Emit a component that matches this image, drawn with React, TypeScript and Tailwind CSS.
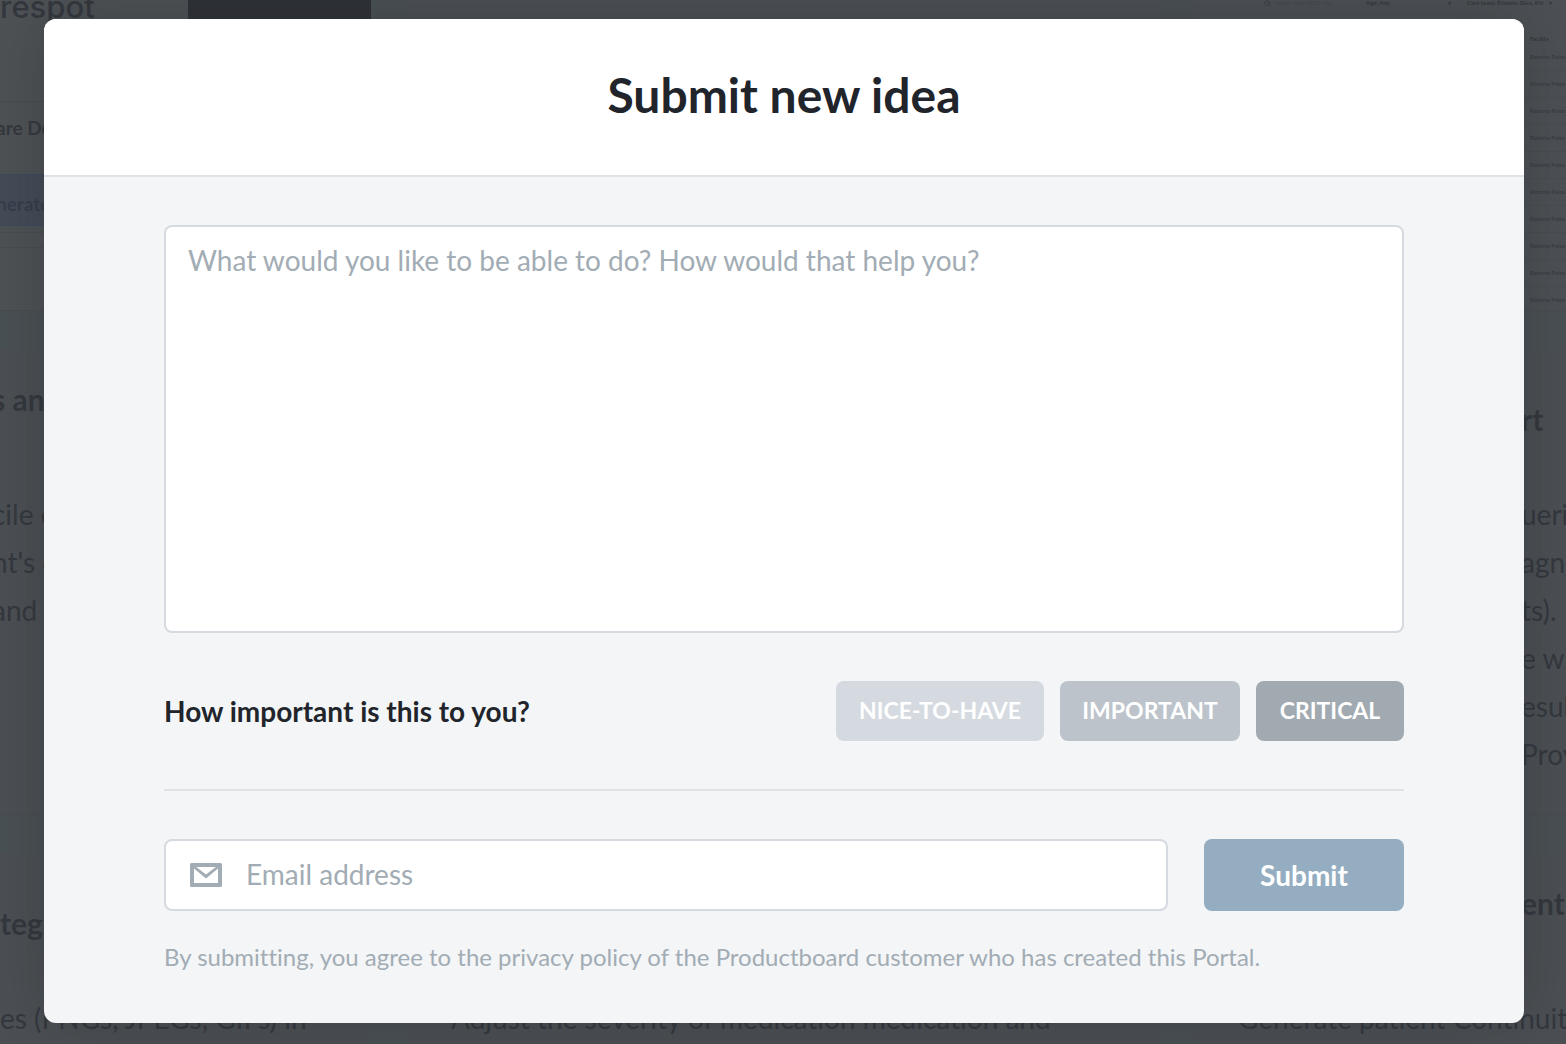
import { Search } from "lucide-react";

const facilityRows = Array.from({ length: 10 }, (_, i) => i);

const importanceOptions = [
  { label: "NICE-TO-HAVE", className: "w-[208px] bg-[#d5dae1]" },
  { label: "IMPORTANT", className: "w-[180px] bg-[#bcc3cb]" },
  { label: "CRITICAL", className: "w-[148px] bg-[#a2aab1]" },
];

const EnvelopeIcon = () => (
  <svg width="32" height="24" viewBox="0 0 32 24" fill="#a2acb4" aria-hidden="true" className="shrink-0">
    <path
      fillRule="evenodd"
      d="M1.5 0h29A1.5 1.5 0 0 1 32 1.5v21a1.5 1.5 0 0 1-1.5 1.5h-29A1.5 1.5 0 0 1 0 22.5v-21A1.5 1.5 0 0 1 1.5 0ZM6.2 4 16 11.4 25.8 4ZM4 5.6V20h24V5.6L16 15.6Z"
    />
  </svg>
);

const PortalBackdrop = () => (
  <div
    aria-hidden="true"
    className="absolute inset-0 flex gap-[38px] overflow-hidden bg-[#4a5154] whitespace-nowrap text-[28px] leading-[48px] text-[#34383e]"
  >
    {/* Left column */}
    <div className="flex w-[371px] shrink-0 flex-col gap-[39px]">
      <div className="h-[311px] shrink-0 overflow-hidden border-b border-[#484c50] bg-[#4e5255]">
        <div className="flex h-[102px] justify-between border-b border-[#484c50]">
          <span className="font-['Inter',sans-serif] text-[31px] font-medium leading-[14px]">respot</span>
          <div className="w-[183px] bg-[#2e3136]" />
        </div>
        <div className="-ml-1 flex h-[72px] items-center pb-5 text-[19px] font-bold">are Documents</div>
        <div className="flex h-[52px] items-center border-y border-[#3c495a] bg-[#454c57] pt-2 text-[19px] font-bold text-[#353e4b]">
          <span className="-ml-1">nerate</span>
        </div>
        <div className="mt-[6px] h-4 border-y border-[#484c50]" />
      </div>
      <div className="h-[465px] shrink-0 overflow-hidden border-b border-[#484c50] bg-[#4c5054] pt-[25px]">
        <div className="-ml-2">
          <h2 className="mb-[67px] text-[30px] font-bold">s and</h2>
          <p>cile c</p>
          <p>nt's c</p>
          <p>and</p>
        </div>
      </div>
      <div className="h-[400px] shrink-0 bg-[#4c5054] pt-[45px]">
        <h2 className="mb-[47px] text-[30px] font-bold">tegrations</h2>
        <p>es (PNGs, JPEGs, GIFs) in</p>
      </div>
    </div>

    {/* Middle column */}
    <div className="flex min-w-0 flex-1 items-start bg-[#4c5054] px-[42px] pt-[994px]">
      <p>Adjust the severity of medication medication and</p>
    </div>

    {/* Right column */}
    <div className="flex w-[370px] shrink-0 flex-col gap-[39px]">
      <div className="h-[311px] shrink-0 overflow-hidden border-b border-[#484c50] bg-[#4d5155] pl-[56px] text-[6px] leading-[6px]">
        <div className="flex h-[33px] items-start">
          <Search size={7} className="ml-3" />
          <span className="ml-1 w-[91px] text-[#45494d]">Name, Age, DOB, etc.</span>
          <span className="w-[82px] font-bold">Age: Any</span>
          <span className="w-[19px]">▾</span>
          <span className="w-[82px] font-bold">Care team: Ernesto Silva, RN</span>
          <span>▾</span>
        </div>
        <div className="flex h-[11px] items-center pl-[278px] font-bold">Facility</div>
        {facilityRows.map((row) => (
          <div key={row} className="flex h-[27px] items-center border-b border-[#494d51] pl-[278px]">
            Rancho Palos Verdes
          </div>
        ))}
      </div>
      <div className="h-[465px] shrink-0 overflow-hidden border-b border-[#484c50] bg-[#4c5054] pl-[325px] pt-[45px]">
        <h2 className="mb-[47px] text-[30px] font-bold">rt</h2>
        <p>ueries</p>
        <p>agnosis</p>
        <p>ts).</p>
        <p>e will</p>
        <p>esults</p>
        <p>Provider</p>
      </div>
      <div className="h-[400px] shrink-0 bg-[#4c5054] pt-[25px]">
        <h2 className="mb-[67px] pl-[325px] text-[30px] font-bold">ent</h2>
        <p className="pl-[42px]">Generate patient Continuity</p>
      </div>
    </div>
  </div>
);

const App = () => {
  return (
    <div className="relative min-h-screen overflow-hidden font-['Lato',sans-serif] [font-variant-ligatures:none]">
      <PortalBackdrop />

      <div
        role="dialog"
        aria-labelledby="idea-title"
        className="relative mt-[19px] mr-[42px] mb-[21px] ml-11 overflow-hidden rounded-xl bg-[#f3f5f7] text-[#21252b] shadow-[0_0_60px_rgba(33,37,43,0.35)]"
      >
        <header className="border-b-2 border-[#dfe3e8] bg-white pt-[46px] pb-[50px] text-center">
          <h1 id="idea-title" className="text-[48px] font-bold leading-[60px]">
            Submit new idea
          </h1>
        </header>

        <form className="px-[120px] pt-12 pb-[50px]" onSubmit={(e) => e.preventDefault()}>
          <textarea
            aria-label="Your idea"
            placeholder="What would you like to be able to do? How would that help you?"
            className="block h-[408px] w-full resize-none rounded-lg border-2 border-[#d5dae1] bg-white px-[22px] py-[15px] text-[28px] leading-9 outline-none placeholder:text-[#a2acb4]"
          />

          <div className="flex items-center justify-between py-12">
            <span id="importance-label" className="text-[28px] font-bold leading-9">
              How important is this to you?
            </span>
            <div role="group" aria-labelledby="importance-label" className="flex gap-4">
              {importanceOptions.map((option) => (
                <button
                  key={option.label}
                  type="button"
                  className={`h-[60px] rounded-lg pb-0.5 text-[23px] font-bold text-white ${option.className}`}
                >
                  {option.label}
                </button>
              ))}
            </div>
          </div>

          <div className="flex gap-9 border-t-2 border-[#dfe3e8] pt-12">
            <label className="flex h-[72px] min-w-0 flex-1 items-center gap-6 rounded-lg border-2 border-[#d5dae1] bg-white px-6">
              <EnvelopeIcon />
              <input
                type="email"
                aria-label="Email address"
                placeholder="Email address"
                className="h-full min-w-0 flex-1 pb-0.5 text-[28px] outline-none placeholder:text-[#a2acb4]"
              />
            </label>
            <button type="submit" className="h-[72px] w-[200px] rounded-lg bg-[#94adc0] text-[28px] font-bold text-white">
              Submit
            </button>
          </div>

          <p className="mt-[30px] text-[24px] leading-8 text-[#a2acb4]">
            By submitting, you agree to the privacy policy of the Productboard customer who has created this Portal.
          </p>
        </form>
      </div>
    </div>
  );
};

export default App;
